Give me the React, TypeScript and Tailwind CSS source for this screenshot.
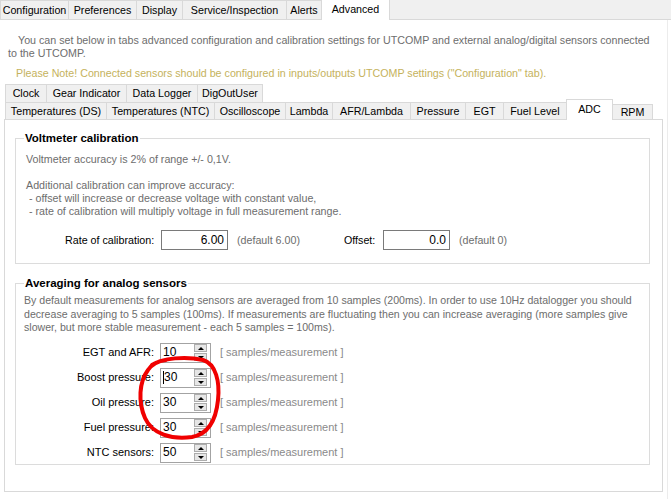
import React from 'react'

const topTabs = [
  { label: 'Configuration', w: 69 },
  { label: 'Preferences', w: 69 },
  { label: 'Display', w: 47 },
  { label: 'Service/Inspection', w: 105 },
  { label: 'Alerts', w: 36 },
]

const row1 = [
  { label: 'Clock', w: 42 },
  { label: 'Gear Indicator', w: 81 },
  { label: 'Data Logger', w: 72 },
  { label: 'DigOutUser', w: 66 },
]

const row2 = [
  { label: 'Temperatures (DS)', w: 102 },
  { label: 'Temperatures (NTC)', w: 109 },
  { label: 'Oscilloscope', w: 72 },
  { label: 'Lambda', w: 48 },
  { label: 'AFR/Lambda', w: 79 },
  { label: 'Pressure', w: 56 },
  { label: 'EGT', w: 39 },
  { label: 'Fuel Level', w: 64 },
]

const sensors = [
  { label: 'EGT and AFR:', value: '10' },
  { label: 'Boost pressure:', value: '30', caret: true },
  { label: 'Oil pressure:', value: '30' },
  { label: 'Fuel pressure:', value: '30' },
  { label: 'NTC sensors:', value: '50' },
]

function Tab({ label, w, h }: { label: string; w: number; h: string }) {
  return (
    <div
      style={{ width: w }}
      className={`${h} -ml-px first:ml-0 flex items-center justify-center bg-[#f0f0f0] border border-b-0 border-[#d9d9d9] text-black whitespace-nowrap`}
    >
      {label}
    </div>
  )
}

function SpinBox({ value, caret }: { value: string; caret?: boolean }) {
  return (
    <div className="w-[51px] h-[20px] border border-[#a3a3a3] bg-white flex items-center">
      <div className="flex-1 flex items-center pl-[2px] text-[12px] text-black">
        {caret && <span className="w-px h-[13px] bg-black" />}
        {value}
      </div>
      <div className="w-[13px] flex flex-col gap-px mr-[3px]">
        <div className="h-[8px] border border-[#adadad] bg-[#e6e6e6] flex items-center justify-center">
          <div className="w-0 h-0 border-l-[3px] border-r-[3px] border-b-[3px] border-l-transparent border-r-transparent border-b-black" />
        </div>
        <div className="h-[8px] border border-[#adadad] bg-[#e6e6e6] flex items-center justify-center">
          <div className="w-0 h-0 border-l-[3px] border-r-[3px] border-t-[3px] border-l-transparent border-r-transparent border-t-black" />
        </div>
      </div>
    </div>
  )
}

export default function App() {
  return (
    <div className="relative w-[671px] h-[499px] overflow-hidden bg-white text-[10.7px] leading-[13px] font-['Liberation_Sans',Arial,sans-serif]">
      {/* main tabs */}
      <div className="h-[20px] flex items-end bg-[#f0f0f0] border-b border-[#d9d9d9]">
        {topTabs.map(t => (
          <Tab key={t.label} label={t.label} w={t.w} h="h-[19px]" />
        ))}
        <div className="relative z-10 -ml-px -mb-px w-[69px] h-[21px] bg-white border border-b-0 border-[#d9d9d9] flex items-start pt-[3px] justify-center text-black">
          Advanced
        </div>
      </div>

      <div className="px-[4px]">
        <div className="pt-[14px] pl-[4px] text-[#6d6d6d] whitespace-nowrap">
          <p className="indent-[10px]">
            You can set below in tabs advanced configuration and calibration settings for UTCOMP and external analog/digital sensors connected
            <br />
            to the UTCOMP.
          </p>
          <p className="mt-[7px] pl-[8px] text-[#c5b25c]">
            Please Note! Connected sensors should be configured in inputs/outputs UTCOMP settings ("Configuration" tab).
          </p>
        </div>

        {/* inner tabs */}
        <div className="mt-[4px] pl-px">
          <div className="flex h-[18px]">
            {row1.map(t => (
              <Tab key={t.label} label={t.label} w={t.w} h="h-[18px]" />
            ))}
          </div>
          <div className="flex items-end h-[17px]">
            {row2.map(t => (
              <Tab key={t.label} label={t.label} w={t.w} h="h-[17px]" />
            ))}
            <div className="relative z-10 -ml-px -mb-px w-[47px] h-[21px] bg-white border border-b-0 border-[#d9d9d9] flex items-start pt-[3px] justify-center text-black">
              ADC
            </div>
            <Tab label="RPM" w={41} h="h-[15px]" />
          </div>
        </div>

        <div className="w-[659px] h-[373px] border border-[#d9d9d9] bg-white px-[10px]">
          <fieldset className="mt-[11px] w-[635px] border border-[#dcdcdc] pl-[10px] pb-[13px]">
            <legend className="-ml-[2px] px-px font-bold text-[11.5px] leading-[14px] text-black">Voltmeter calibration</legend>
            <div className="pt-[8px] text-[#6d6d6d] whitespace-nowrap">
              <p>Voltmeter accuracy is 2% of range +/- 0,1V.</p>
              <p className="mt-[13px]">
                Additional calibration can improve accuracy:
                <br />
                &nbsp;- offset will increase or decrease voltage with constant value,
                <br />
                &nbsp;- rate of calibration will multiply voltage in full measurement range.
              </p>
            </div>
            <div className="mt-[12px] flex items-center h-[20px]">
              <span className="ml-[39px] w-[96px] text-black whitespace-nowrap">Rate of calibration:</span>
              <div className="w-[67px] h-[20px] border border-[#7a7a7a] flex items-center justify-end pr-[3px] text-[12px] text-black">6.00</div>
              <span className="ml-[9px] w-[107px] text-[#6d6d6d]">(default 6.00)</span>
              <span className="w-[39px] text-black">Offset:</span>
              <div className="w-[67px] h-[20px] border border-[#7a7a7a] flex items-center justify-end pr-[3px] text-[12px] text-black">0.0</div>
              <span className="ml-[9px] text-[#6d6d6d]">(default 0)</span>
            </div>
          </fieldset>

          <fieldset className="mt-[12px] w-[635px] border border-[#dcdcdc] pl-[8px] pb-[1px]">
            <legend className="ml-0 px-px font-bold text-[11.5px] leading-[14px] text-black">Averaging for analog sensors</legend>
            <p className="pt-[4px] text-[10.6px] leading-[13.5px] text-[#6d6d6d] whitespace-nowrap">
              By default measurements for analog sensors are averaged from 10 samples (200ms). In order to use 10Hz datalogger you should
              <br />
              decrease averaging to 5 samples (100ms). If measurements are fluctuating then you can increase averaging (more samples give
              <br />
              slower, but more stable measurement - each 5 samples = 100ms).
            </p>
            <div className="mt-[8px] flex flex-col gap-[5px]">
              {sensors.map(s => (
                <div key={s.label} className="flex items-center h-[20px]">
                  <span className="w-[136px] pr-[6px] text-right text-[11px] text-black whitespace-nowrap">{s.label}</span>
                  <SpinBox value={s.value} caret={s.caret} />
                  <span className="ml-[9px] text-[11px] text-[#8a8a8a]">[ samples/measurement ]</span>
                </div>
              ))}
            </div>
          </fieldset>
        </div>
      </div>

      <div className="absolute top-[20px] bottom-0 right-[3px] w-px bg-[#ececec]" />

      {/* red hand-drawn annotation */}
      <svg className="absolute left-0 top-0 pointer-events-none" width="671" height="499" viewBox="0 0 671 499">
        <path
          d="M152 365 C162 358 186 356 203 360 C216 364 220 382 218 400 C216 420 209 434 192 437 C172 440 152 434 145 418 C138 402 139 382 148 370 C152 364 158 361 166 360"
          fill="none"
          stroke="#f00000"
          strokeWidth="4"
          strokeLinecap="round"
        />
      </svg>
    </div>
  )
}
